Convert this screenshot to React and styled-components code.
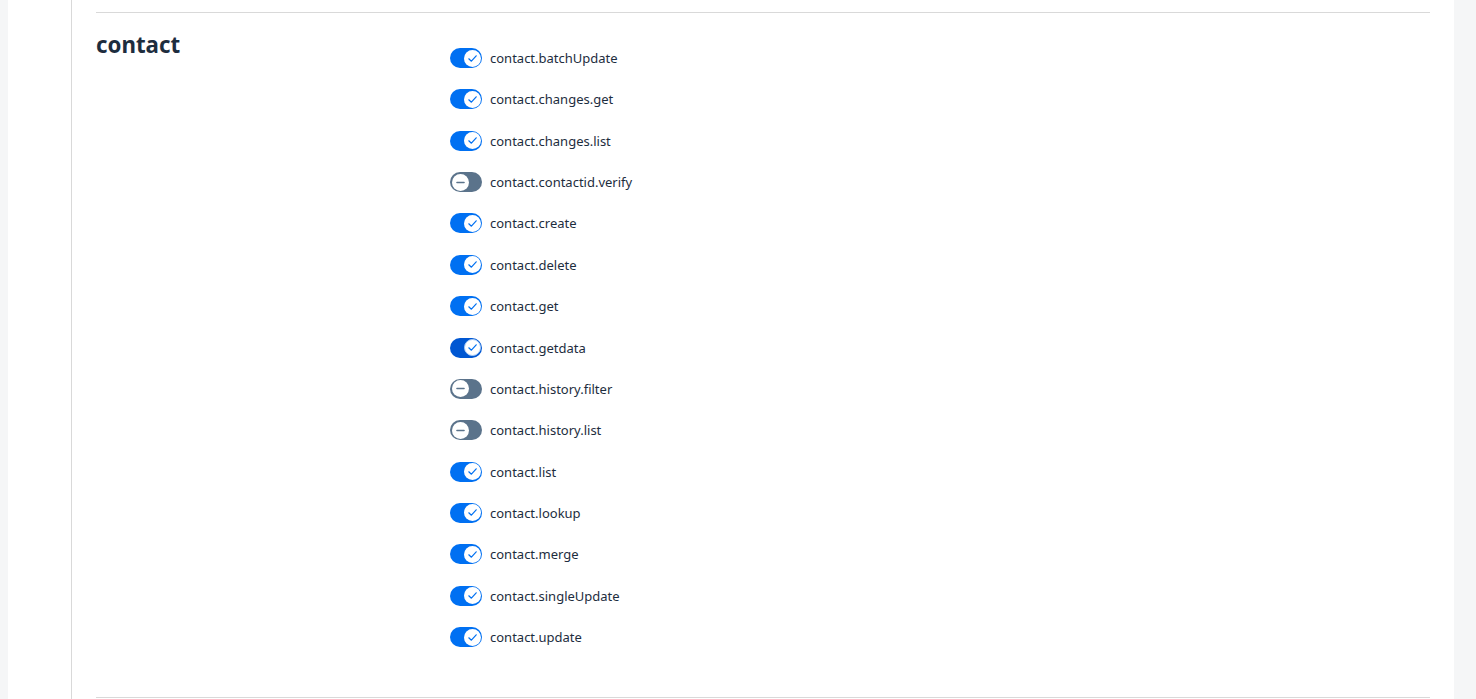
import React from "react";
import styled, { createGlobalStyle } from "styled-components";

const GlobalStyle = createGlobalStyle`
  html, body {
    margin: 0;
    padding: 0;
    background: #f5f6f7;
    font-family: "Noto Sans", "Open Sans", Arial, sans-serif;
    color: #1d2d3e;
  }
`;

const Page = styled.div`
  display: flex;
  height: 699px;
  padding: 0 22px 0 8px;
  overflow: hidden;
`;

const Panel = styled.div`
  flex: 1;
  display: flex;
  background: #fff;
`;

const Rail = styled.div`
  width: 63px;
  border-right: 1px solid #d9d9d9;
`;

const Content = styled.div`
  flex: 1;
  padding: 12px 24px 0 24px;
`;

const Section = styled.section`
  display: flex;
  border-top: 1px solid #d9d9d9;
  border-bottom: 1px solid #d9d9d9;
  padding: 35px 0 50px;
`;

const Heading = styled.h2`
  width: 354px;
  margin: -12px 0 0;
  font-size: 22.3px;
  font-weight: 700;
  line-height: 18px;
  color: #1d2d3e;
`;

const List = styled.div`
  display: flex;
  flex-direction: column;
  gap: 21.36px;
`;

const Row = styled.label`
  display: flex;
  align-items: center;
  gap: 8px;
  height: 20px;
  font-size: 13px;
  color: #1d2d3e;
`;

const Track = styled.span`
  display: inline-flex;
  align-items: center;
  justify-content: ${p => (p.$on ? "flex-end" : "flex-start")};
  box-sizing: border-box;
  width: 32px;
  height: 20px;
  padding: 1.5px;
  border-radius: 10px;
  background: ${p => (p.$on ? (p.$focus ? "#0057d2" : "#0070f2") : "#5b738b")};
`;

const Knob = styled.span`
  display: flex;
  align-items: center;
  justify-content: center;
  box-sizing: border-box;
  width: 17px;
  height: 17px;
  border-radius: 50%;
  background: #fff;
  border: ${p => (p.$focus ? "1.5px solid #a9cdf8" : "none")};
`;

const Check = () => (
  <svg width="11" height="11" viewBox="0 0 11 11">
    <path d="M1.8 5.8 L4.4 8.2 L9.2 2.8" fill="none" stroke="#0070f2" strokeWidth="1.2" strokeLinecap="round" strokeLinejoin="round" />
  </svg>
);

const Dash = () => (
  <svg width="11" height="11" viewBox="0 0 11 11">
    <path d="M2 5.5 H9" stroke="#5b738b" strokeWidth="1.6" strokeLinecap="round" />
  </svg>
);

const Toggle = ({ on, focus }) => (
  <Track $on={on} $focus={focus}>
    <Knob $focus={focus}>{on ? <Check /> : <Dash />}</Knob>
  </Track>
);

const items = [
  { name: "contact.batchUpdate", on: true },
  { name: "contact.changes.get", on: true },
  { name: "contact.changes.list", on: true },
  { name: "contact.contactid.verify", on: false },
  { name: "contact.create", on: true },
  { name: "contact.delete", on: true },
  { name: "contact.get", on: true },
  { name: "contact.getdata", on: true, focus: true },
  { name: "contact.history.filter", on: false },
  { name: "contact.history.list", on: false },
  { name: "contact.list", on: true },
  { name: "contact.lookup", on: true },
  { name: "contact.merge", on: true },
  { name: "contact.singleUpdate", on: true },
  { name: "contact.update", on: true },
];

export default function App() {
  return (
    <>
      <GlobalStyle />
      <Page>
        <Panel>
          <Rail />
          <Content>
            <Section>
              <Heading>contact</Heading>
              <List>
                {items.map(it => (
                  <Row key={it.name}>
                    <Toggle on={it.on} focus={it.focus} />
                    {it.name}
                  </Row>
                ))}
              </List>
            </Section>
          </Content>
        </Panel>
      </Page>
    </>
  );
}
